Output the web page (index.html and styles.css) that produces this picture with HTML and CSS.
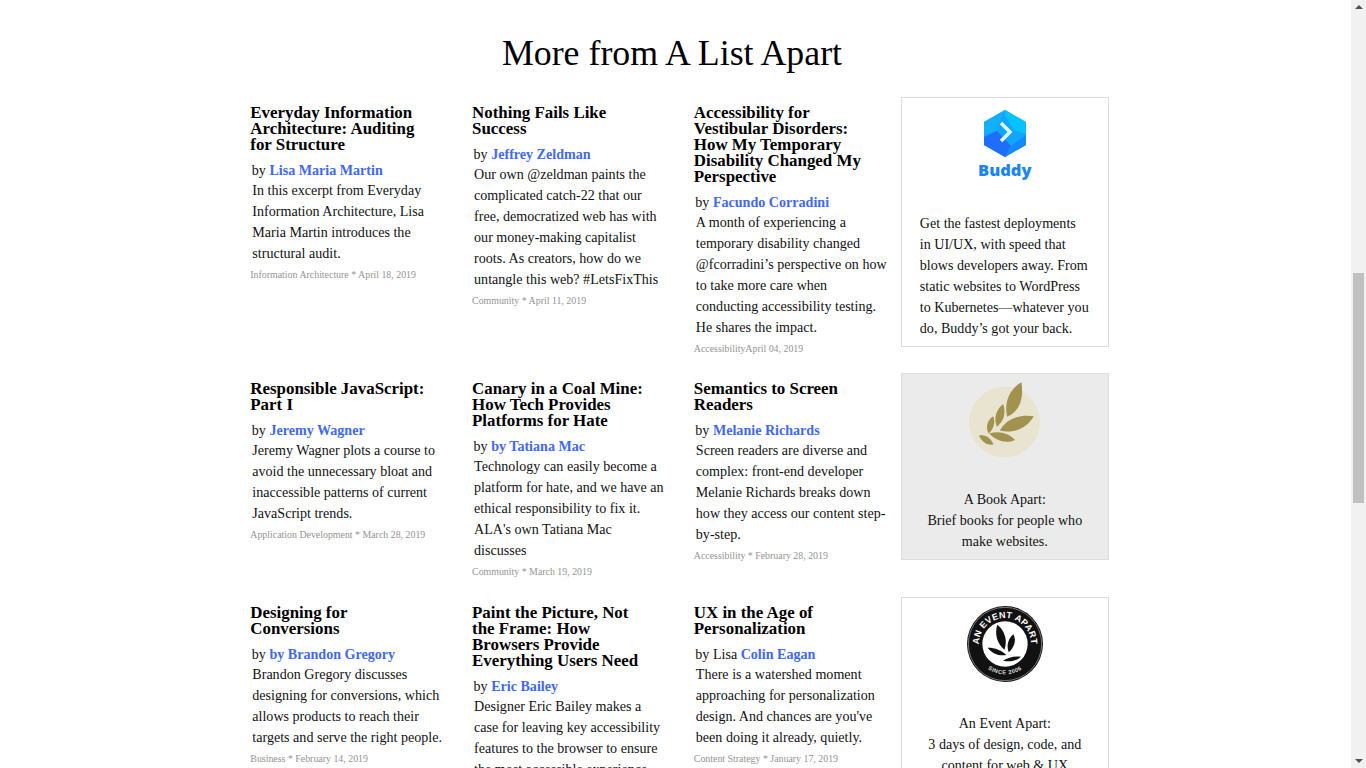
FILE: index.html
```html
<!DOCTYPE html>
<html lang="en">
<head>
    <meta charset="UTF-8">
    <meta name="viewport" content="width=device-width, initial-scale=1.0">
    <title>More from A List Apart</title>
    <link rel="stylesheet" href="styles.css">
</head>
<body>
    <div class="page">
        <main class="content">
            <h2 class="section-title">More from A List Apart</h2>
            <div class="grid">
                <article class="post">
                    <h3>Everyday Information Architecture: Auditing for Structure</h3>
                    <p class="by">by <a href="#">Lisa Maria Martin</a></p>
                    <p class="desc">In this excerpt from Everyday Information Architecture, Lisa Maria Martin introduces the structural audit.</p>
                    <p class="meta">Information Architecture * April 18, 2019</p>
                </article>
                <article class="post">
                    <h3>Nothing Fails Like Success</h3>
                    <p class="by">by <a href="#">Jeffrey Zeldman</a></p>
                    <p class="desc">Our own @zeldman paints the complicated catch-22 that our free, democratized web has with our money-making capitalist roots. As creators, how do we untangle this web? #LetsFixThis</p>
                    <p class="meta">Community * April 11, 2019</p>
                </article>
                <article class="post">
                    <h3>Accessibility for Vestibular Disorders: How My Temporary Disability Changed My Perspective</h3>
                    <p class="by">by <a href="#">Facundo Corradini</a></p>
                    <p class="desc">A month of experiencing a temporary disability changed @fcorradini’s perspective on how to take more care when conducting accessibility testing. He shares the impact.</p>
                    <p class="meta">AccessibilityApril 04, 2019</p>
                </article>
                <aside class="promo">
                    <div class="promo-logo">
                        <div class="buddy">
                            <svg width="42" height="47" viewBox="0 0 42 47">
                                <path d="M21 0 42 12V35L21 47 0 35V12Z" fill="#0fa6fb"/>
                                <path d="M21 0 42 12V24L30 20 21 6Z" fill="#05c3fd"/>
                                <path d="M0 12 21 0 12 20 0 24Z" fill="#12b0fc"/>
                                <path d="M0 35V27L13 21 27 36 21 47Z" fill="#1f6dfb"/>
                                <path d="M27 36 42 25V35L21 47Z" fill="#1589fb"/>
                                <path d="M17 13 26 22 17 31" fill="none" stroke="#e6fbff" stroke-width="3.4"/>
                            </svg>
                            <span class="buddy-name">Buddy</span>
                        </div>
                    </div>
                    <p class="promo-text">Get the fastest deployments in UI/UX, with speed that blows developers away. From static websites to WordPress to Kubernetes—whatever you do, Buddy’s got your back.</p>
                </aside>

                <article class="post">
                    <h3>Responsible JavaScript: Part I</h3>
                    <p class="by">by <a href="#">Jeremy Wagner</a></p>
                    <p class="desc">Jeremy Wagner plots a course to avoid the unnecessary bloat and inaccessible patterns of current JavaScript trends.</p>
                    <p class="meta">Application Development * March 28, 2019</p>
                </article>
                <article class="post">
                    <h3>Canary in a Coal Mine: How Tech Provides Platforms for Hate</h3>
                    <p class="by">by <a href="#">by Tatiana Mac</a></p>
                    <p class="desc">Technology can easily become a platform for hate, and we have an ethical responsibility to fix it. ALA's own Tatiana Mac discusses</p>
                    <p class="meta">Community * March 19, 2019</p>
                </article>
                <article class="post">
                    <h3>Semantics to Screen Readers</h3>
                    <p class="by">by <a href="#">Melanie Richards</a></p>
                    <p class="desc">Screen readers are diverse and complex: front-end developer Melanie Richards breaks down how they access our content step-by-step.</p>
                    <p class="meta">Accessibility * February 28, 2019</p>
                </article>
                <aside class="promo promo-grey">
                    <div class="promo-logo">
                        <svg width="71" height="77" viewBox="207 37 214 231">
                            <circle cx="314" cy="157" r="107" fill="#e8e4cf"/>
                            <g fill="#a1934f">
                                <path d="M365 37C372 85 362 122 322 141 312 100 328 58 365 37Z"/>
                                <path d="M402 140C380 178 340 192 300 183 318 150 358 132 402 140Z"/>
                                <path d="M310 103C320 132 310 158 291 171 280 145 290 118 310 103Z"/>
                                <path d="M280 140C288 160 280 180 266 192 256 172 262 152 280 140Z"/>
                                <path d="M346 211C320 224 288 214 268 192 296 182 326 190 346 211Z"/>
                                <path d="M281 225C260 228 245 216 237 198 256 192 274 206 281 225Z"/>
                            </g>
                        </svg>
                    </div>
                    <p class="promo-text promo-center">A Book Apart:<br>Brief books for people who make websites.</p>
                </aside>

                <article class="post">
                    <h3>Designing for Conversions</h3>
                    <p class="by">by <a href="#">by Brandon Gregory</a></p>
                    <p class="desc">Brandon Gregory discusses designing for conversions, which allows products to reach their targets and serve the right people.</p>
                    <p class="meta">Business * February 14, 2019</p>
                </article>
                <article class="post">
                    <h3>Paint the Picture, Not the Frame: How Browsers Provide Everything Users Need</h3>
                    <p class="by">by <a href="#">Eric Bailey</a></p>
                    <p class="desc">Designer Eric Bailey makes a case for leaving key accessibility features to the browser to ensure the most accessible experience.</p>
                    <p class="meta">Accessibility * February 7, 2019</p>
                </article>
                <article class="post">
                    <h3>UX in the Age of Personalization</h3>
                    <p class="by">by Lisa <a href="#">Colin Eagan</a></p>
                    <p class="desc">There is a watershed moment approaching for personalization design. And chances are you've been doing it already, quietly.</p>
                    <p class="meta">Content Strategy * January 17, 2019</p>
                </article>
                <aside class="promo">
                    <div class="promo-logo">
                        <svg width="76" height="76" viewBox="200 47 228 228">
                            <defs>
                                <path id="ring-top" d="M240.7 187.7A78 78 0 1 1 387.3 187.7"/>
                                <path id="ring-bottom" d="M236 207A90 90 0 0 0 392 207"/>
                            </defs>
                            <circle cx="314" cy="161" r="114" fill="#111"/>
                            <circle cx="314" cy="161" r="110" fill="none" stroke="#777" stroke-width="3"/>
                            <circle cx="314" cy="161" r="68" fill="#fff"/>
                            <text class="aea-ring"><textPath href="#ring-top" startOffset="50%" text-anchor="middle">AN EVENT APART</textPath></text>
                            <text class="aea-since"><textPath href="#ring-bottom" startOffset="50%" text-anchor="middle">SINCE 2006</textPath></text>
                            <g fill="#111">
                                <path d="M291 103C315 122 322 152 312 178 290 160 282 130 291 103Z"/>
                                <path d="M339 132C349 150 342 172 325 186 318 166 323 146 339 132Z"/>
                                <path d="M262 172C285 172 305 180 318 194 297 198 275 190 262 172Z"/>
                                <path d="M362 199C346 214 326 214 308 211 322 201 342 196 362 199Z"/>
                            </g>
                        </svg>
                    </div>
                    <p class="promo-text promo-center">An Event Apart:<br>3 days of design, code, and content for web &amp; UX designers.</p>
                </aside>
            </div>
        </main>
        <div class="scrollbar">
            <span class="arrow arrow-up"></span>
            <div class="track"><div class="thumb"></div></div>
            <span class="arrow arrow-down"></span>
        </div>
    </div>
</body>
</html>
```

FILE: styles.css
```css
* {
    box-sizing: border-box;
}

html, body {
    margin: 0;
    padding: 0;
    height: 100%;
    overflow: hidden;
}

body {
    font-family: "Liberation Serif", "Times New Roman", serif;
    font-size: 14.08px;
    color: #111;
    background: #fff;
}

.page {
    display: flex;
    height: 768px;
    overflow: hidden;
}

.content {
    flex: 1;
    min-width: 0;
    overflow: hidden;
}

.section-title {
    margin: 0;
    padding: 32px 7px 0 0;
    height: 97px;
    font-size: 35.8px;
    line-height: 42px;
    font-weight: normal;
    text-align: center;
    color: #000;
}

.grid {
    display: grid;
    grid-template-columns: 221.75px 221.75px 207px 208px;
    grid-template-rows: 259px 207px auto;
    row-gap: 17px;
    align-items: start;
    margin-left: 250.3px;
}

.post {
    padding-top: 8px;
}

.post h3 {
    margin: 0 0 8px;
    width: 180px;
    font-size: 16.9px;
    line-height: 16px;
    color: #000;
}

.by {
    margin: 0 0 0 1.5px;
    line-height: 19px;
}

.by a {
    color: #4169ee;
    font-weight: bold;
    text-decoration: none;
}

.desc {
    margin: 0 0 0 2px;
    width: 192px;
    line-height: 21px;
}

.meta {
    margin: 4px 0 0;
    font-size: 9.88px;
    line-height: 14px;
    color: #949494;
}

.promo {
    border: 1px solid #ddd;
    padding: 8px 18px 7px;
    background: #fff;
}

.promo-grey {
    background: #ebebeb;
}

.promo-logo {
    display: flex;
    justify-content: center;
    height: 107px;
}

.buddy {
    display: flex;
    flex-direction: column;
    align-items: center;
    padding-top: 4px;
}

.buddy-name {
    margin-top: 1px;
    font-family: "Open Sans", sans-serif;
    font-weight: 800;
    font-size: 16.5px;
    line-height: 24px;
    color: #1a85f5;
}

.promo-text {
    margin: 0;
    line-height: 21px;
}

.promo-center {
    text-align: center;
}

.aea-ring {
    font-family: "Liberation Sans", sans-serif;
    font-weight: bold;
    font-size: 27px;
    letter-spacing: 1px;
    fill: #fff;
}

.aea-since {
    font-family: "Liberation Sans", sans-serif;
    font-weight: bold;
    font-size: 17px;
    letter-spacing: 1.5px;
    fill: #ddd;
}

.scrollbar {
    flex: none;
    width: 15px;
    display: flex;
    flex-direction: column;
    align-items: center;
    background: #f1f1f1;
}

.arrow {
    flex: none;
    width: 0;
    height: 0;
    margin: 5px 0;
    border-left: 4px solid transparent;
    border-right: 4px solid transparent;
}

.arrow-up {
    border-bottom: 4px solid #505050;
}

.arrow-down {
    border-top: 4px solid #505050;
}

.track {
    flex: 1;
    width: 100%;
    padding: 259px 2px 0;
}

.thumb {
    height: 230px;
    background: #c1c1c1;
}
```
